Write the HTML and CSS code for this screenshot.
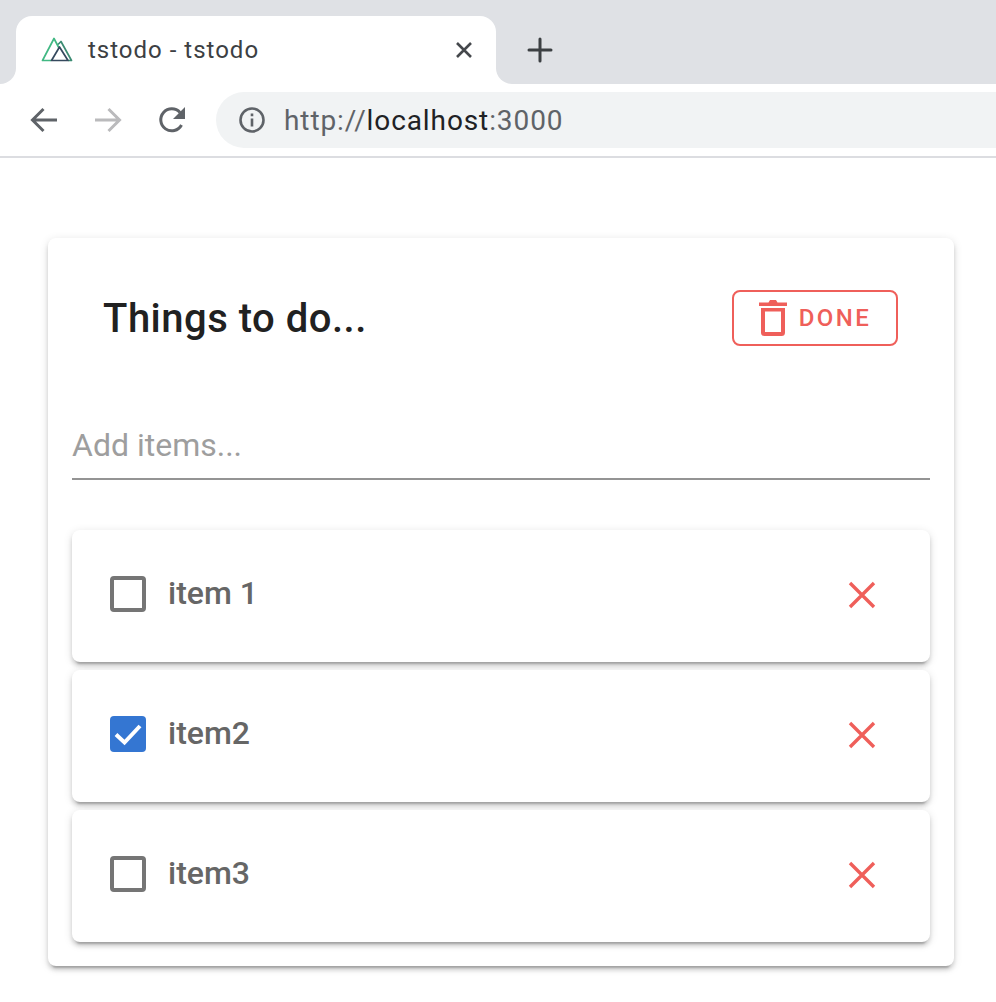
FILE: index.html
```html
<!DOCTYPE html>
<html lang="en">
<head>
    <meta charset="UTF-8">
    <meta name="viewport" content="width=device-width, initial-scale=1.0">
    <title>tstodo - tstodo</title>
    <link rel="stylesheet" href="styles.css">
</head>
<body>

    <!-- Browser chrome -->
    <div class="tab-strip">
        <div class="strip-left"></div>
        <div class="tab-slot">
            <div class="tab">
                <svg class="favicon" width="32" height="26" viewBox="0 0 32 26" fill="none" stroke-width="1.700" stroke-linejoin="round">
                    <path d="M10 24.500H1.500L13 2.500L18 12" stroke="#41b883"/>
                    <path d="M17 8.500L20 5.500L30.500 24.500H27" stroke="#3c8c73"/>
                    <path d="M10.500 24.500L18.500 11L27 24.500Z" stroke="#35495e"/>
                </svg>
                <span class="tab-title">tstodo - tstodo</span>
                <svg class="tab-close" width="18" height="18" viewBox="0 0 18 18" fill="none" stroke="#45484c" stroke-width="2.600">
                    <path d="M2 2L16 16M16 2L2 16"/>
                </svg>
            </div>
        </div>
        <div class="strip-right">
            <svg class="new-tab" width="26" height="26" viewBox="0 0 26 26" fill="none" stroke="#3c4043" stroke-width="3" stroke-linecap="round">
                <path d="M13 2V24M2 13H24"/>
            </svg>
        </div>
    </div>

    <div class="toolbar">
        <svg class="nav-icon" width="30" height="30" viewBox="0 0 30 30" fill="none" stroke="#5f6368" stroke-width="3">
            <path d="M28 15H4M14.500 4L3.500 15L14.500 26"/>
        </svg>
        <svg class="nav-icon" width="30" height="30" viewBox="0 0 30 30" fill="none" stroke="#bababc" stroke-width="3">
            <path d="M2 15H26M15.500 4L26.500 15L15.500 26"/>
        </svg>
        <svg class="nav-icon" width="30" height="30" viewBox="0 0 30 30" fill="none">
            <path d="M24.500 20A11 11 0 1 1 23 7.500" stroke="#5f6368" stroke-width="3"/>
            <path d="M28 2V14H16Z" fill="#5f6368"/>
        </svg>
        <div class="address-bar">
            <svg width="28" height="28" viewBox="0 0 28 28" fill="none">
                <circle cx="14" cy="14" r="11.500" stroke="#5f6368" stroke-width="2.600"/>
                <path d="M12.700 7.500h2.600v2.800h-2.600zM12.700 12.500h2.600v8h-2.600z" fill="#5f6368"/>
            </svg>
            <span class="url">http://<b>localhost</b>:3000</span>
        </div>
    </div>

    <!-- Todo card -->
    <div class="page">
        <div class="card">
            <div class="card-header">
                <h1>Things to do...</h1>
                <button class="done-btn">
                    <svg width="28" height="38" viewBox="0 0 28 38" fill="#ef5f5a">
                        <path d="M0 3.500H9.500L11 1H17L18.500 3.500H28V7H0Z"/>
                        <path d="M2 9H26V33.500A3.500 3.500 0 0 1 22.500 37H5.500A3.500 3.500 0 0 1 2 33.500ZM6 12.500V33H22V12.500Z" fill-rule="evenodd"/>
                    </svg>
                    DONE
                </button>
            </div>

            <div class="add-field">Add items...</div>

            <div class="item">
                <span class="check"></span>
                <span class="item-label">item 1</span>
                <svg class="remove" width="30" height="30" viewBox="0 0 30 30" fill="none" stroke="#ef5f5a" stroke-width="3.400">
                    <path d="M3 3L27 27M27 3L3 27"/>
                </svg>
            </div>
            <div class="item">
                <span class="check checked">
                    <svg width="36" height="36" viewBox="0 0 36 36" fill="none" stroke="#fff" stroke-width="4">
                        <path d="M6 18.500L14.500 26.500L30 10"/>
                    </svg>
                </span>
                <span class="item-label">item2</span>
                <svg class="remove" width="30" height="30" viewBox="0 0 30 30" fill="none" stroke="#ef5f5a" stroke-width="3.400">
                    <path d="M3 3L27 27M27 3L3 27"/>
                </svg>
            </div>
            <div class="item">
                <span class="check"></span>
                <span class="item-label">item3</span>
                <svg class="remove" width="30" height="30" viewBox="0 0 30 30" fill="none" stroke="#ef5f5a" stroke-width="3.400">
                    <path d="M3 3L27 27M27 3L3 27"/>
                </svg>
            </div>
        </div>
    </div>

</body>
</html>
```

FILE: styles.css
```css
/* Page */
html, body {
    margin: 0;
    padding: 0;
    background: #fff;
    font-family: Roboto, sans-serif;
}

/* Browser tabs */
.tab-strip {
    display: flex;
    height: 84px;
    background: #fff;
}
.strip-left {
    width: 16px;
    background: #dfe1e5;
    border-bottom-right-radius: 16px;
}
.tab-slot {
    width: 480px;
    padding-top: 16px;
    box-sizing: border-box;
    background: #dfe1e5;
}
.tab {
    height: 68px;
    display: flex;
    align-items: center;
    padding: 0 23px 0 25px;
    background: #fff;
    border-radius: 16px 16px 0 0;
}
.favicon {
    flex: none;
    margin-bottom: 2px;
}
.tab-title {
    flex: 1;
    margin-left: 15px;
    font-size: 24px;
    letter-spacing: 1px;
    color: #3c4043;
    font-family: Roboto, sans-serif;
}
.strip-right {
    flex: 1;
    display: flex;
    align-items: center;
    padding: 16px 0 0 31px;
    background: #dfe1e5;
    border-bottom-left-radius: 16px;
}

/* Browser toolbar */
.toolbar {
    display: flex;
    align-items: center;
    height: 72px;
    padding-left: 29px;
    background: #fff;
    border-bottom: 2px solid #dcdde1;
    box-sizing: content-box;
}
.nav-icon {
    flex: none;
    margin-right: 34px;
}
.toolbar .nav-icon:nth-child(3) {
    margin-right: 29px;
}
.address-bar {
    flex: 1;
    height: 56px;
    display: flex;
    align-items: center;
    padding-left: 22px;
    background: #f1f3f4;
    border-radius: 28px 0 0 28px;
}
.url {
    margin-left: 18px;
    font-size: 28px;
    letter-spacing: 0.9px;
    color: #5f6368;
}
.url b {
    font-weight: 400;
    color: #202124;
}

/* Card */
.page {
    padding: 80px 42px 36px 48px;
}
.card {
    height: 728px;
    padding: 0 24px;
    box-sizing: border-box;
    background: #fff;
    border-radius: 8px;
    box-shadow: 0 6px 2px -4px rgba(0, 0, 0, 0.2), 0 4px 4px 0 rgba(0, 0, 0, 0.14), 0 2px 10px 0 rgba(0, 0, 0, 0.12);
}
.card-header {
    display: flex;
    align-items: center;
    justify-content: space-between;
    height: 160px;
    padding: 0 32px 0 31px;
}
h1 {
    margin: 0;
    font-size: 40px;
    font-weight: 500;
    letter-spacing: 0.5px;
    color: #212121;
}
.done-btn {
    width: 166px;
    height: 56px;
    display: flex;
    align-items: center;
    justify-content: center;
    gap: 12px;
    margin: 0;
    padding: 0;
    background: #fff;
    border: 2px solid #ef5f5a;
    border-radius: 8px;
    color: #ef5f5a;
    font-family: Roboto, sans-serif;
    font-size: 24px;
    font-weight: 500;
    letter-spacing: 2.4px;
}

/* Input */
.add-field {
    height: 82px;
    line-height: 94px;
    box-sizing: border-box;
    border-bottom: 2px solid #949494;
    font-size: 32px;
    color: #9e9e9e;
}

/* Items */
.item {
    display: flex;
    align-items: center;
    height: 132px;
    margin-bottom: 8px;
    padding: 0 53px 6px 38px;
    box-sizing: border-box;
    background: #fff;
    border-radius: 8px;
    box-shadow: 0 6px 2px -4px rgba(0, 0, 0, 0.2), 0 4px 4px 0 rgba(0, 0, 0, 0.14), 0 2px 10px 0 rgba(0, 0, 0, 0.12);
}
.add-field + .item {
    margin-top: 50px;
}
.check {
    width: 36px;
    height: 36px;
    box-sizing: border-box;
    border: 4px solid #757575;
    border-radius: 4px;
    margin-right: 22px;
    margin-top: 2px;
}
.check.checked {
    border: none;
    background: #3476d2;
}
.check.checked svg {
    display: block;
}
.item-label {
    flex: 1;
    font-size: 32px;
    font-weight: 500;
    color: #666;
}
.remove {
    flex: none;
    margin-top: 4px;
}
```
